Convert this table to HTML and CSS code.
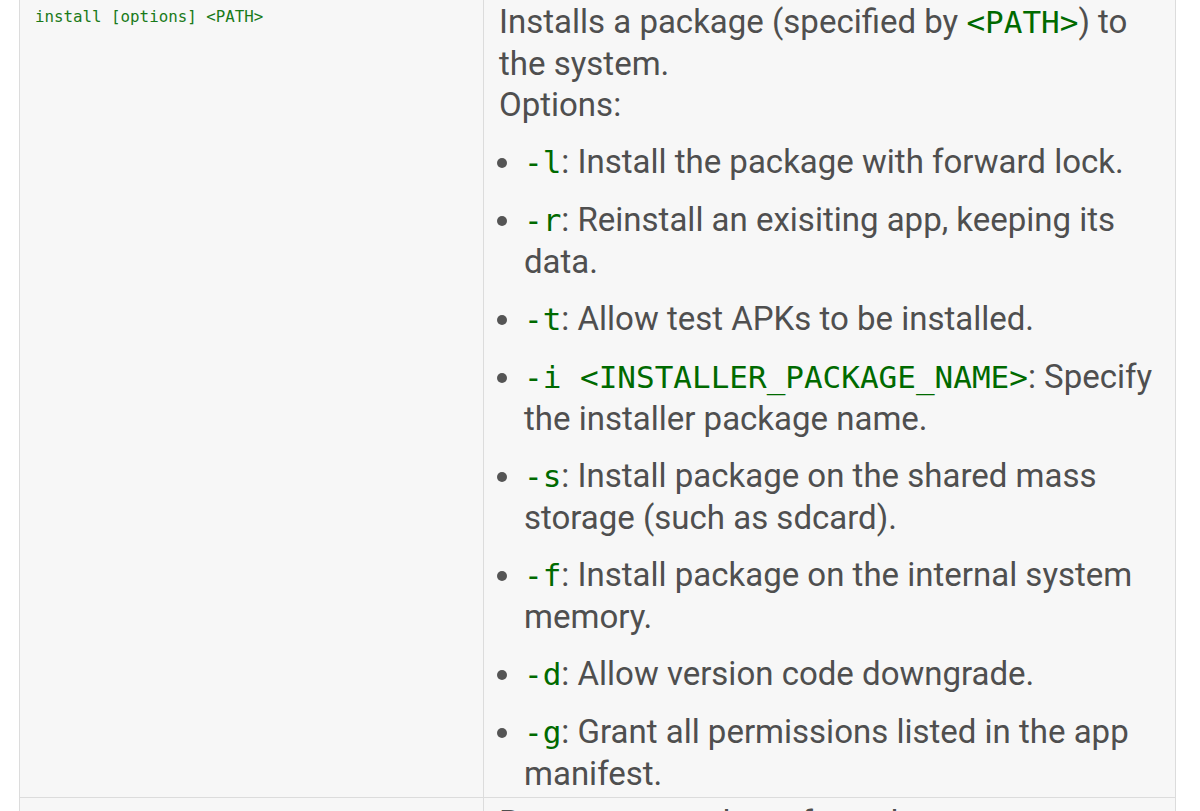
FILE: index.html
```html
<!DOCTYPE html>
<html lang="en">
<head>
<meta charset="utf-8">
<title>adb shell pm</title>
<link rel="stylesheet" href="styles.css">
</head>
<body>
<table class="cmd-table">
  <tbody>
    <tr>
      <td class="cmd"><code>install [options] &lt;PATH&gt;</code></td>
      <td class="desc">
        <p>Installs a package (specified by <code>&lt;PATH&gt;</code>) to the system.<br>Options:</p>
        <ul>
          <li><code>-l</code>: Install the package with forward lock.</li>
          <li><code>-r</code>: Reinstall an exisiting app, keeping its data.</li>
          <li><code>-t</code>: Allow test APKs to be installed.</li>
          <li><code>-i &lt;INSTALLER_PACKAGE_NAME&gt;</code>: Specify the installer package name.</li>
          <li><code>-s</code>: Install package on the shared mass storage (such as sdcard).</li>
          <li><code>-f</code>: Install package on the internal system memory.</li>
          <li><code>-d</code>: Allow version code downgrade.</li>
          <li><code>-g</code>: Grant all permissions listed in the app manifest.</li>
        </ul>
      </td>
    </tr>
    <tr>
      <td class="cmd"><code>uninstall [options] &lt;PACKAGE&gt;</code></td>
      <td class="desc">
        <p>Removes a package from the system.</p>
      </td>
    </tr>
  </tbody>
</table>
</body>
</html>
```
FILE: styles.css
```css
html, body {
  margin: 0;
  padding: 0;
  background: #ffffff;
}

body {
  font-family: Roboto, "Noto Sans", sans-serif;
  color: #4f4f4f;
  overflow: hidden;
}

.cmd-table {
  margin: -4px 0 0 19px;
  width: 1157px;
  border-collapse: collapse;
  table-layout: fixed;
  background: #f7f7f7;
}

.cmd-table td {
  border: 1px solid #dcdcdc;
  vertical-align: top;
  padding: 4px 14px 3px 15px;
}

.cmd-table td.cmd {
  width: 434px;
}

.cmd code {
  display: block;
  font-family: "DejaVu Sans Mono", "Liberation Mono", monospace;
  font-size: 15.8px;
  line-height: 24px;
  padding-top: 4px;
  color: #1a7a1a;
}

.desc {
  font-size: 33px;
  line-height: 41px;
}

.desc p {
  margin: 0;
}

.desc code {
  font-family: "DejaVu Sans Mono", "Liberation Mono", monospace;
  font-size: 31px;
  color: #006a00;
}

.desc ul {
  margin: 16px 0 0;
  padding-left: 25px;
}

.desc li + li {
  margin-top: 16px;
}

.desc li::marker {
  color: #555;
}
```
